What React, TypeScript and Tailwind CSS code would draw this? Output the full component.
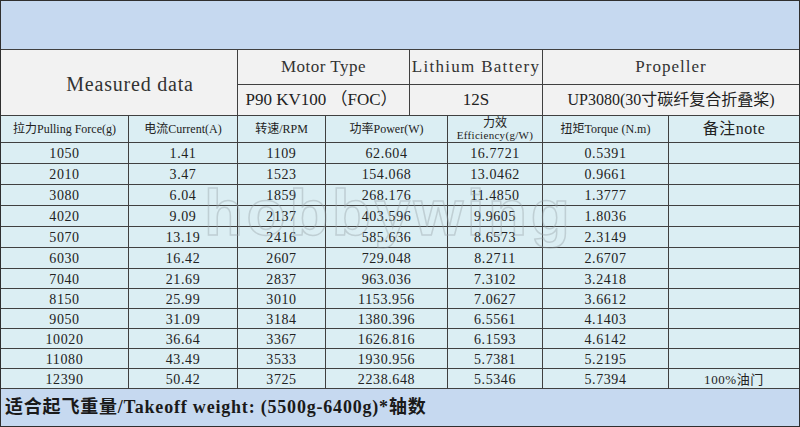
const rows = [
  ["1050", "1.41", "1109", "62.604", "16.7721", "0.5391", ""],
  ["2010", "3.47", "1523", "154.068", "13.0462", "0.9661", ""],
  ["3080", "6.04", "1859", "268.176", "11.4850", "1.3777", ""],
  ["4020", "9.09", "2137", "403.596", "9.9605", "1.8036", ""],
  ["5070", "13.19", "2416", "585.636", "8.6573", "2.3149", ""],
  ["6030", "16.42", "2607", "729.048", "8.2711", "2.6707", ""],
  ["7040", "21.69", "2837", "963.036", "7.3102", "3.2418", ""],
  ["8150", "25.99", "3010", "1153.956", "7.0627", "3.6612", ""],
  ["9050", "31.09", "3184", "1380.396", "6.5561", "4.1403", ""],
  ["10020", "36.64", "3367", "1626.816", "6.1593", "4.6142", ""],
  ["11080", "43.49", "3533", "1930.956", "5.7381", "5.2195", ""],
  ["12390", "50.42", "3725", "2238.648", "5.5346", "5.7394", "100%油门"],
];

const cols =
  "grid grid-cols-[128px_109px_88px_122px_95px_126px_1fr] border-b border-[#404040]";

export default function App() {
  return (
    <div className="relative w-[800px] h-[427px] overflow-hidden flex flex-col border border-[#2f2f2f] text-[#222] font-[family-name:'Liberation_Serif','Noto_Sans_CJK_SC',serif]">
      <div className="h-[49px] shrink-0 bg-[#c6d9f0] border-b border-[#404040]" />

      {/* product header */}
      <div className="grid grid-cols-[237px_172px_133px_1fr] grid-rows-[35px_30px] bg-[#f2f2f2] border-b border-[#404040]">
        <div className="row-span-2 flex items-center justify-center border-r border-[#404040] text-[20px] tracking-[0.8px] text-[#333] pt-[3px] pl-[22px]">
          Measured data
        </div>
        <div className="flex items-center justify-center border-r border-b border-[#404040] text-[17px] tracking-[0.5px] text-[#333]">
          Motor Type
        </div>
        <div className="flex items-center justify-center border-r border-b border-[#404040] text-[17px] tracking-[1.3px] text-[#333]">
          Lithium Battery
        </div>
        <div className="flex items-center justify-center border-b border-[#404040] text-[17px] tracking-[1px] text-[#333]">
          Propeller
        </div>
        <div className="flex items-center justify-center border-r border-[#404040] text-[17px] pr-[4px]">
          P90 KV100 （FOC）
        </div>
        <div className="flex items-center justify-center border-r border-[#404040] text-[17px]">
          12S
        </div>
        <div className="flex items-center justify-center text-[16px]">
          UP3080(30寸碳纤复合折叠桨)
        </div>
      </div>

      {/* column titles */}
      <div className={`${cols} h-[27px] bg-[#dbeef3] text-[12px]`}>
        <div className="flex items-center justify-center border-r border-[#404040]">拉力Pulling Force(g)</div>
        <div className="flex items-center justify-center border-r border-[#404040]">电流Current(A)</div>
        <div className="flex items-center justify-center border-r border-[#404040]">转速/RPM</div>
        <div className="flex items-center justify-center border-r border-[#404040]">功率Power(W)</div>
        <div className="flex flex-col items-center justify-center border-r border-[#404040] leading-[12px]">
          <span className="text-[12px]">力效</span>
          <span className="text-[11px] tracking-[0.3px]">Efficiency(g/W)</span>
        </div>
        <div className="flex items-center justify-center border-r border-[#404040]">扭矩Torque (N.m)</div>
        <div className="flex items-center justify-center text-[16px] tracking-[0.5px]">备注note</div>
      </div>

      {/* measurements */}
      {rows.map((r, i) => (
        <div
          key={r[0]}
          className={`${cols} ${i < 6 ? "h-[21px]" : "h-[20px]"} bg-[#dbeef3] text-[14px] tracking-[0.6px]`}
        >
          {r.map((v, j) => (
            <div
              key={j}
              className={`flex items-center justify-center ${j < 6 ? "border-r border-[#404040]" : "text-[13px]"}`}
            >
              {v}
            </div>
          ))}
        </div>
      ))}

      <div className="flex-1 flex items-center bg-[#c6d9f0] pl-[4px] text-[18px] font-bold tracking-[0.8px] text-[#1a1a1a]">
        适合起飞重量/Takeoff weight: (5500g-6400g)*轴数
      </div>

      {/* watermark */}
      <div className="absolute left-[203px] top-[164px] pointer-events-none text-[64px] font-bold tracking-[3.5px] text-transparent font-[family-name:'Liberation_Sans',sans-serif] [-webkit-text-stroke:1.5px_rgba(150,160,165,0.4)]">
        hobbywing
      </div>
    </div>
  );
}
